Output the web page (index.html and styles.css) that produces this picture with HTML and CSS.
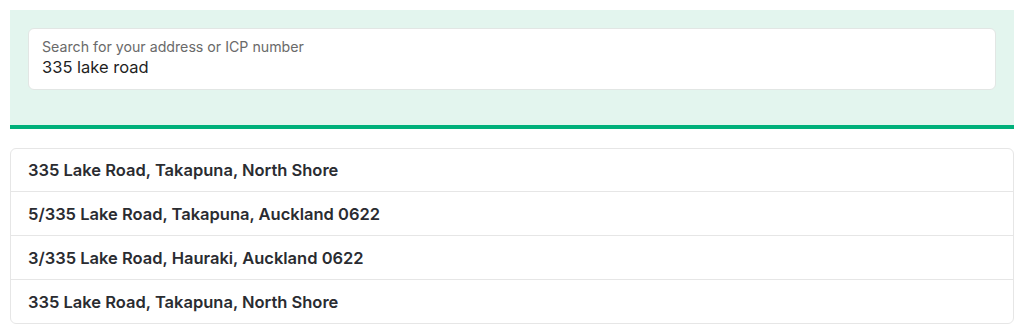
FILE: index.html
```html
<!DOCTYPE html>
<html lang="en">
<head>
<meta charset="utf-8">
<title>Address search</title>
<link rel="stylesheet" href="styles.css">
</head>
<body>
<div class="page">
  <div class="search-panel">
    <label class="field">
      <span class="field-label">Search for your address or ICP number</span>
      <span class="field-value">335 lake road</span>
    </label>
  </div>
  <ul class="results">
    <li class="result">335 Lake Road, Takapuna, North Shore</li>
    <li class="result">5/335 Lake Road, Takapuna, Auckland 0622</li>
    <li class="result">3/335 Lake Road, Hauraki, Auckland 0622</li>
    <li class="result">335 Lake Road, Takapuna, North Shore</li>
  </ul>
</div>
</body>
</html>
```

FILE: styles.css
```css
* { box-sizing: border-box; }
html, body { margin: 0; padding: 0; background: #ffffff; }
body {
  font-family: Inter, "Noto Sans", sans-serif;
  color: #222;
}
.page {
  padding: 10px 10px 0 10px;
  display: flex;
  flex-direction: column;
  gap: 19px;
}
.search-panel {
  background: #e3f5ee;
  border-bottom: 4px solid #00b07a;
  padding: 18px 18px 35px 18px;
}
.field {
  display: flex;
  flex-direction: column;
  background: #fff;
  border: 1px solid #e2e6e4;
  border-radius: 6px;
  padding: 9px 13px 11px 13px;
  height: 62px;
}
.field-label {
  font-size: 14.2px;
  line-height: 18px;
  color: #6a6a6a;
}
.field-value {
  font-size: 16.5px;
  line-height: 23px;
  color: #1f1f1f;
}
.results {
  list-style: none;
  margin: 0;
  padding: 0;
  border: 1px solid #e6e6e6;
  border-radius: 6px;
}
.result {
  height: 44px;
  display: flex;
  align-items: center;
  padding: 0 17px;
  font-size: 16.5px;
  font-weight: 600;
  color: #2a2c31;
  border-top: 1px solid #e6e6e6;
}
.result:first-child { border-top: none; height: 42px; }
```
